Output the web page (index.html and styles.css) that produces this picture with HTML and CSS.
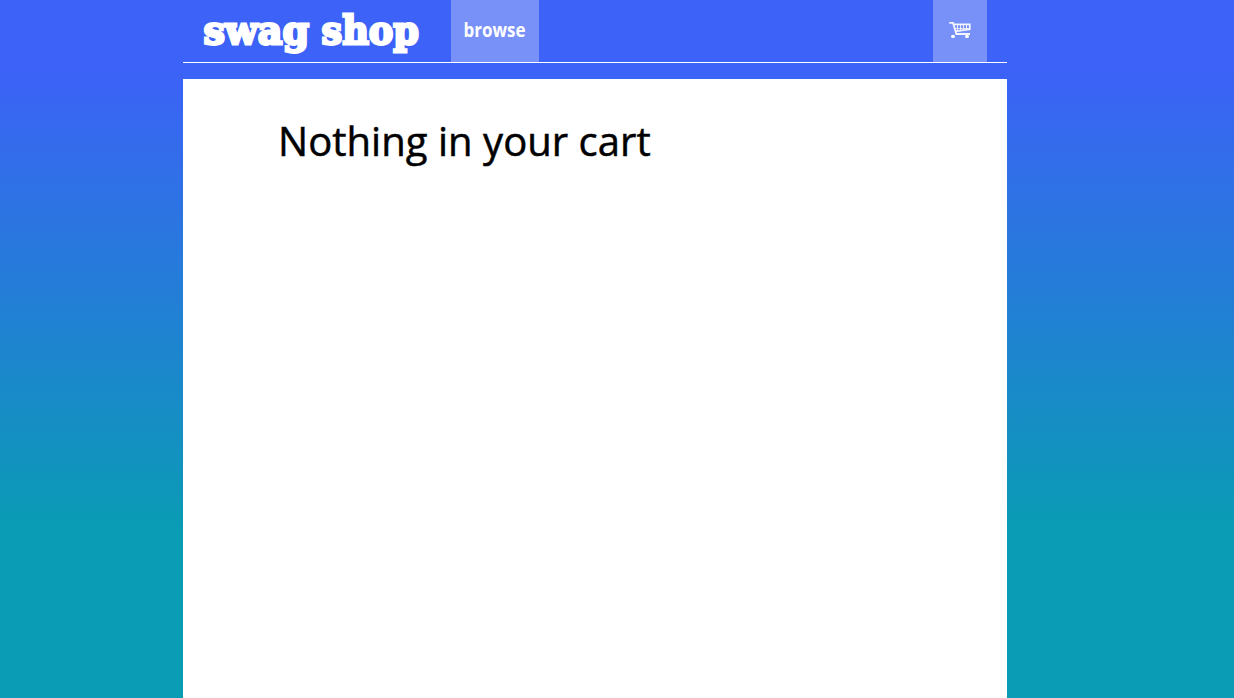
FILE: index.html
```html
<!DOCTYPE html>
<html lang="en">
<head>
<meta charset="utf-8">
<title>swag shop</title>
<link rel="stylesheet" href="styles.css">
</head>
<body>
<div class="page">
  <header class="bar">
    <a class="brand">
      <svg class="logo" width="220" height="62" viewBox="0 0 220 62">
        <text x="1.5" y="43.5" textLength="105.5" lengthAdjust="spacingAndGlyphs">swag</text>
        <text x="119.5" y="43.5" textLength="97.5" lengthAdjust="spacingAndGlyphs">shop</text>
      </svg>
    </a>
    <a class="browse"><span class="label">browse</span></a>
    <a class="cart">
      <svg width="24" height="20" viewBox="0 0 24 20" fill="none" stroke="#fff">
        <path d="M1.2 2.8H5L8.3 14H22" stroke-width="1.8" opacity=".9"/>
        <path d="M5.6 4.3H21.8V9.3L7.2 11.3" stroke-width="1.7" opacity=".9"/>
        <path d="M9.5 4.5V10M12.5 4.5V10M15.5 4.5V9.5M18.5 4.5V9.5M7 8.6H21" stroke-width="1" opacity=".8"/>
        <ellipse cx="5" cy="16.4" rx="2" ry="1.6" fill="#fff" stroke="none"/>
        <ellipse cx="19" cy="16.4" rx="2" ry="1.6" fill="#fff" stroke="none"/>
      </svg>
    </a>
  </header>
  <main class="content">
    <h1 class="message">Nothing in your cart</h1>
  </main>
</div>
</body>
</html>
```
FILE: styles.css
```css
* { box-sizing: border-box; }
html, body { height: 100%; }
body {
  margin: 0;
  overflow: hidden;
  font-family: "Open Sans", sans-serif;
  background: linear-gradient(180deg, #3c62f7 70px, #0a9bb5 525px);
}
.page {
  width: 824px;
  height: 698px;
  margin-left: 183px;
  display: flex;
  flex-direction: column;
}
.bar {
  height: 63px;
  flex: none;
  display: flex;
  padding: 0 20px 0 19px;
  margin-bottom: 16px;
  border-bottom: 1px solid #fff;
}
.brand { width: 249px; }
.logo { display: block; overflow: visible; }
.logo text {
  font: bold 40px "DejaVu Serif", serif;
  fill: #fff;
  stroke: #fff;
  stroke-width: 2.8px;
}
.browse {
  width: 88px;
  display: flex;
  align-items: center;
  justify-content: center;
  padding: 0 1px 3px 0;
  background: #7791f9;
  color: #fff;
  font-size: 20px;
  font-weight: 700;
}
.label { transform: scaleX(0.85); }
.cart {
  width: 54px;
  margin-left: auto;
  display: flex;
  align-items: center;
  justify-content: center;
  padding-bottom: 2px;
  background: #7791f9;
}
.content {
  flex: 1;
  background: #fff;
  padding: 34px 95px;
}
.message {
  margin: 0;
  font-size: 40px;
  line-height: 56px;
  font-weight: 400;
  color: #000;
  letter-spacing: 0.03px;
  -webkit-text-stroke: 0.5px #000;
}
```
